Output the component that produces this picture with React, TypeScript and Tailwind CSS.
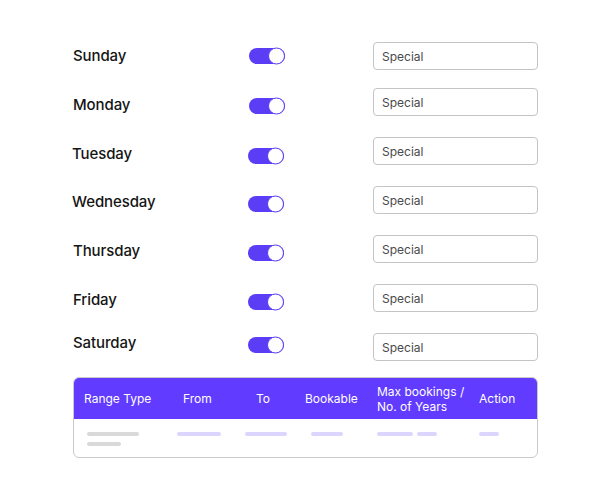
const days = [
  { name: 'Sunday', mt: 'mt-[42px]', label: 'translate-y-0', toggle: 'translate-x-[1px] translate-y-0' },
  { name: 'Monday', mt: 'mt-[18px]', label: 'translate-y-[3px]', toggle: 'translate-x-[1px] translate-y-[4px]' },
  { name: 'Tuesday', mt: 'mt-[21px]', label: 'translate-y-[3px] -translate-x-[1px]', toggle: 'translate-y-[5px]' },
  { name: 'Wednesday', mt: 'mt-[21px]', label: 'translate-y-[2px] -translate-x-[1px]', toggle: 'translate-y-[4px]' },
  { name: 'Thursday', mt: 'mt-[21px]', label: 'translate-y-[2px]', toggle: 'translate-y-[4px]' },
  { name: 'Friday', mt: 'mt-[21px]', label: 'translate-y-[2px]', toggle: 'translate-y-[4px]' },
  { name: 'Saturday', mt: 'mt-[21px]', label: '-translate-y-[4px]', toggle: '-translate-y-[2px]' },
];

function Toggle({ className }: { className: string }) {
  return (
    <div className={`relative h-4 w-9 rounded-full bg-[#5b3df6] ${className}`}>
      <div className="absolute right-0 top-1/2 h-[17px] w-[17px] -translate-y-1/2 rounded-full border border-[#5b3df6] bg-white" />
    </div>
  );
}

export default function App() {
  return (
    <div className="h-[500px] w-[610px] overflow-hidden bg-white pl-[73px] font-['Inter',sans-serif] text-[#151515]">
      {days.map((day) => (
        <div key={day.name} className={`flex h-[28px] items-center ${day.mt}`}>
          <div className={`w-[175px] text-[15px] font-medium tracking-[-0.1px] ${day.label}`}>{day.name}</div>
          <Toggle className={day.toggle} />
          <div className="ml-[89px] flex h-[28px] w-[165px] items-center rounded-[4px] border border-[#c4c4c4] pl-2 pt-[2px] text-[12px] text-[#4a4a4a]">
            Special
          </div>
        </div>
      ))}

      {/* Date ranges table */}
      <div className="mt-4 w-[465px] overflow-hidden rounded-[6px] border border-[#cacaca]">
        <div className="grid h-[41px] grid-cols-[99px_73px_49px_72px_102px_1fr] items-center bg-[#613bff] pl-[10px] text-[12px] leading-[15px] text-white">
          <div>Range Type</div>
          <div>From</div>
          <div>To</div>
          <div>Bookable</div>
          <div>
            Max bookings /<br />
            No. of Years
          </div>
          <div>Action</div>
        </div>
        <div className="flex h-[38px] items-start pl-[13px] pt-[13px]">
          <div className="flex flex-col gap-[6px]">
            <div className="h-1 w-[52px] rounded-full bg-[#d9d9d9]" />
            <div className="h-1 w-[34px] rounded-full bg-[#d9d9d9]" />
          </div>
          <div className="ml-[38px] h-1 w-[44px] rounded-full bg-[#dcd6ff]" />
          <div className="ml-[24px] h-1 w-[42px] rounded-full bg-[#dcd6ff]" />
          <div className="ml-[24px] h-1 w-[32px] rounded-full bg-[#dcd6ff]" />
          <div className="ml-[34px] h-1 w-[36px] rounded-full bg-[#dcd6ff]" />
          <div className="ml-[4px] h-1 w-[20px] rounded-full bg-[#dcd6ff]" />
          <div className="ml-[42px] h-1 w-[20px] rounded-full bg-[#dcd6ff]" />
        </div>
      </div>
    </div>
  );
}
